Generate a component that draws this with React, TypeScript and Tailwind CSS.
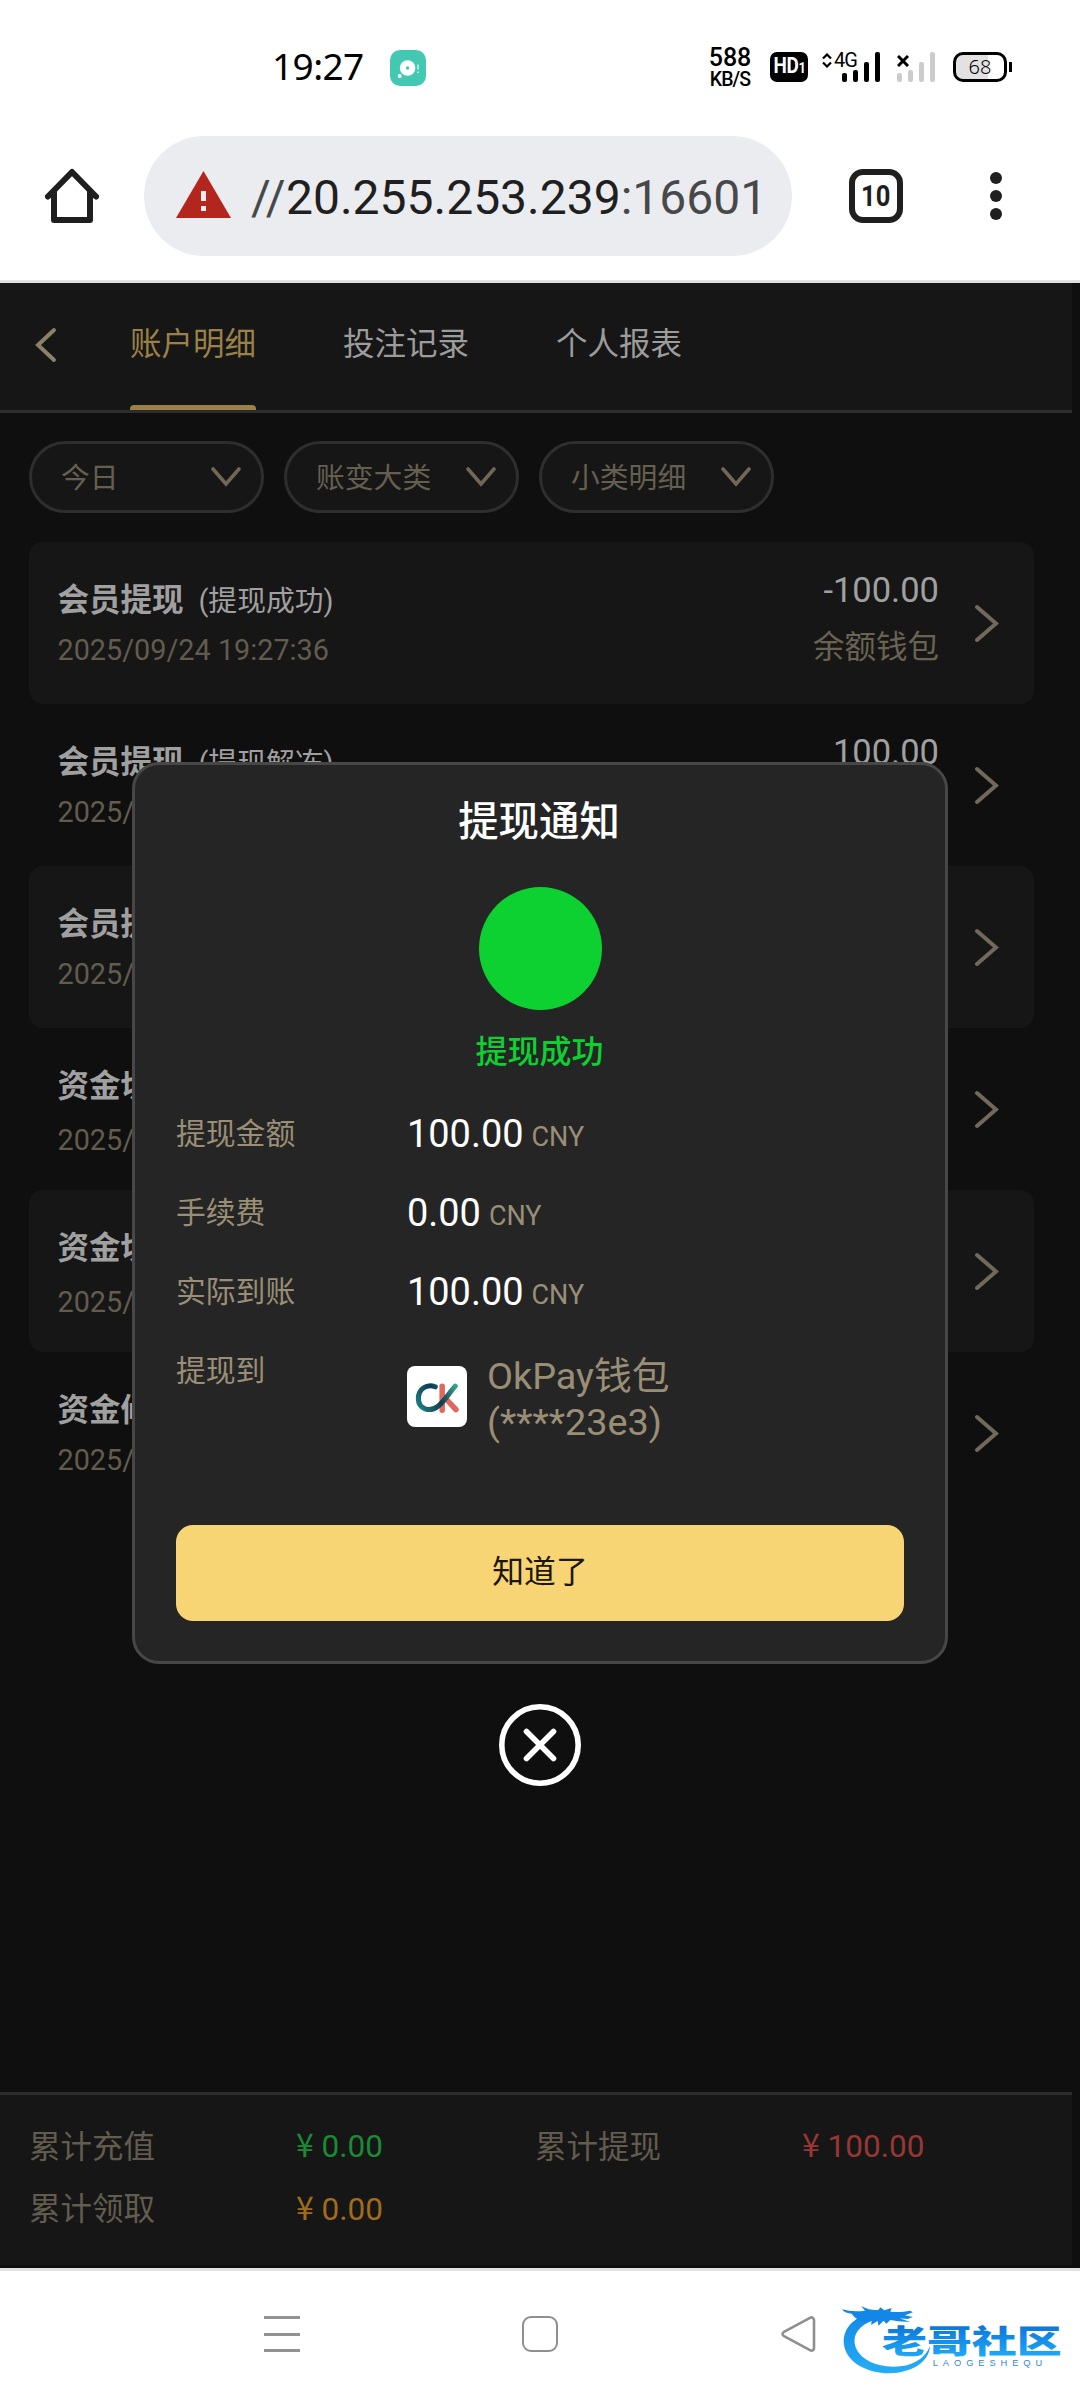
import { FC } from "react";
import { clsx } from "clsx";

interface RecordRow {
  title: string;
  status?: string;
  time: string;
  amount: string;
  wallet: string;
  loose?: boolean;
}

const tabs = ["账户明细", "投注记录", "个人报表"];
const filters = ["今日", "账变大类", "小类明细"];

const records: RecordRow[] = [
  { title: "会员提现", status: "(提现成功)", time: "2025/09/24 19:27:36", amount: "-100.00", wallet: "余额钱包" },
  { title: "会员提现", status: "(提现解冻)", time: "2025/09/24 19:27:36", amount: "100.00", wallet: "余额钱包" },
  { title: "会员提现", status: "(提现冻结)", time: "2025/09/24 19:26:12", amount: "-100.00", wallet: "余额钱包" },
  { title: "资金切换", time: "2025/09/24 19:25:48", amount: "100.00", wallet: "余额钱包", loose: true },
  { title: "资金切换", time: "2025/09/24 19:25:48", amount: "-100.00", wallet: "余额钱包", loose: true },
  { title: "资金修正", time: "2025/09/24 19:20:05", amount: "100.00", wallet: "余额钱包" },
];

const totals = [
  { label: "累计充值", value: "0.00", color: "text-[#1a8a35]" },
  { label: "累计提现", value: "100.00", color: "text-[#983735]" },
  { label: "累计领取", value: "0.00", color: "text-[#a16c1b]" },
];

const details = [
  { label: "提现金额", value: "100.00" },
  { label: "手续费", value: "0.00" },
  { label: "实际到账", value: "100.00" },
];

const SignalBars: FC<{ className: string }> = ({ className }) => (
  <div className={clsx("flex items-end gap-[6px]", className)}>
    <div className="h-[9px] w-[5px] rounded-[2px] bg-current" />
    <div className="h-3 w-[5px] rounded-[2px] bg-current" />
    <div className="h-5 w-[5px] rounded-[2px] bg-current" />
    <div className="h-[30px] w-[5px] rounded-[2px] bg-current" />
  </div>
);

const StatusBar = () => (
  <div className="flex h-[136px] items-start pl-[272px] text-black">
    <span className="mt-[41px] w-[118px] font-['Noto_Sans',sans-serif] text-[37px] leading-[50px] tracking-[-0.6px]">
      19:27
    </span>
    <svg className="mt-[50px] h-9 w-9" viewBox="0 0 36 36">
      <rect width="36" height="36" rx="10" fill="#43c8b4" />
      <circle cx="17.6" cy="18" r="7.8" fill="#fff" />
      <circle cx="17.6" cy="18" r="1.7" fill="#43c8b4" />
      <circle cx="9.7" cy="26" r="2" fill="#fff" />
      <path d="M28 14.500v5M28 21.500v1.500" stroke="#c5f0e8" strokeWidth="1.600" />
    </svg>
    <div className="mt-[46px] ml-[280px] flex w-12 flex-col items-center font-medium">
      <span className="text-[25px] leading-[24px]">588</span>
      <span className="text-[19.5px] leading-[20px] tracking-[-0.9px]">KB/S</span>
    </div>
    <div className="mt-[52px] ml-4 flex h-[30px] w-[38px] items-center justify-center rounded-[7px] bg-black">
      <span className="scale-x-[0.86] text-[22px] leading-[30px] font-bold tracking-[-0.5px] text-white">
        HD<span className="text-[15px]">1</span>
      </span>
    </div>
    <div className="relative mt-[52px] ml-[14px] h-[30px] w-[58px]">
      <svg className="absolute top-[1px] left-0 h-[15px] w-[10px]" viewBox="0 0 10 15" fill="none" stroke="#000" strokeWidth="2.200">
        <path d="M1 5.500 5 1.500l4 4M1 9.500l4 4 4-4" />
      </svg>
      <span className="absolute top-[-2px] left-3 text-[20px] leading-[20px] tracking-[-1px]">4G</span>
      <SignalBars className="absolute right-0 bottom-0" />
    </div>
    <div className="relative mt-[52px] ml-[17px] h-[30px] w-[38px]">
      <svg className="absolute top-[3px] left-0 h-3 w-3" viewBox="0 0 12 12" stroke="#000" strokeWidth="3">
        <path d="M1 1l10 10M11 1 1 11" />
      </svg>
      <SignalBars className="absolute bottom-0 left-0 text-[#cccccc]" />
    </div>
    <div className="mt-[52px] ml-[18px] flex items-center gap-[2px]">
      <div className="flex h-[30px] w-[54px] items-center justify-center rounded-[10px] border-[3px] border-black bg-linear-to-r from-[#e2e2e2] from-66% to-white to-66%">
        <span className="font-['Noto_Sans',sans-serif] text-[20px] leading-[24px] font-light">68</span>
      </div>
      <div className="h-[10px] w-[3px] bg-black" />
    </div>
  </div>
);

const AddressBar = () => (
  <div className="flex h-[147px] items-start border-b-[3px] border-[#e0e0e0] pl-[45px]">
    <svg className="mt-8 h-[56px] w-[54px]" viewBox="0 0 54 56" fill="none" stroke="#1f1f1f" strokeWidth="6" strokeLinecap="round" strokeLinejoin="round">
      <path d="M3 28.500 27 4l24 24.500" />
      <path d="M9 24v28h36V24" />
    </svg>
    <div className="ml-[45px] flex h-[120px] w-[648px] items-center rounded-full bg-[#ebecf0] pl-8">
      <svg className="-mt-1 h-[47px] w-[55px]" viewBox="0 0 55 47">
        <path d="M27.500 0 55 47H0z" fill="#b3261e" />
        <path d="M27.500 20v10M27.500 35v5" stroke="#ebecf0" strokeWidth="5" />
      </svg>
      <span className="mt-[3px] ml-[20px] text-[48px] leading-[60px] text-[#1f1f1f]">
        <span className="tracking-[0.3px] text-[#47484a]">//</span>
        20.255.253.239<span className="text-[#47484a]">:16601</span>
      </span>
    </div>
    <div className="mt-[33px] ml-[57px] flex h-[54px] w-[54px] items-center justify-center rounded-[14px] border-[6px] border-[#1f1f1f]">
      <span className="scale-x-[0.88] text-[29px] leading-[40px] font-bold text-[#1f1f1f]">10</span>
    </div>
    <div className="mt-9 ml-[87px] flex flex-col gap-[6px]">
      <div className="h-3 w-3 rounded-full bg-[#1f1f1f]" />
      <div className="h-3 w-3 rounded-full bg-[#1f1f1f]" />
      <div className="h-3 w-3 rounded-full bg-[#1f1f1f]" />
    </div>
  </div>
);

const PageHeader = () => (
  <div className="flex h-[130px] w-[1072px] border-b-[3px] border-[#2d2d2d] bg-[#161616] pl-[35px]">
    <svg className="mt-[44px] h-[36px] w-[22px]" viewBox="0 0 22 36" fill="none" stroke="#8b8168" strokeWidth="4" strokeLinecap="round">
      <path d="M19 3 3 18l16 15" />
    </svg>
    <div className="ml-[73px] flex gap-[87px]">
      {tabs.map((tab, idx) => (
        <div key={tab} className="flex w-[126px] flex-col justify-between">
          <span
            className={clsx(
              "mt-[39px] text-[31.5px] leading-[46px] whitespace-nowrap",
              idx === 0 ? "text-[#9a8148]" : "text-[#9c9c9c]",
            )}
          >
            {tab}
          </span>
          {idx === 0 && <div className="h-[5px] rounded-t-[4px] bg-[#9a8148]" />}
        </div>
      ))}
    </div>
  </div>
);

const FilterBar = () => (
  <div className="flex gap-5 pt-7 pl-[29px]">
    {filters.map((filter) => (
      <div
        key={filter}
        className="flex h-[72px] w-[235px] items-center justify-between rounded-full border-[3px] border-[#2e2e2e] bg-[#161616] pr-5 pl-[29px]"
      >
        <span className="mt-[2px] text-[28.8px] leading-[40px] text-[#655f50]">{filter}</span>
        <svg className="h-[20px] w-[30px]" viewBox="0 0 30 20" fill="none" stroke="#6f6854" strokeWidth="3.600" strokeLinecap="round">
          <path d="M2 2l13 15L28 2" />
        </svg>
      </div>
    ))}
  </div>
);

const RecordItem: FC<{ record: RecordRow; filled: boolean }> = ({ record, filled }) => (
  <div className={clsx("flex h-[162px] w-[1005px] rounded-[14px] pr-[27px] pl-[28.5px]", filled && "bg-[#161616]")}>
    <div className="flex-1 pt-[37px]">
      <div className="flex items-center gap-[15px] leading-[44px] text-[#a0a0a0]">
        <span className="text-[31.5px] font-bold">{record.title}</span>
        {record.status && <span className="text-[28.8px]">{record.status}</span>}
      </div>
      <p className={clsx("text-[28.8px] leading-9 text-[#625c4e]", record.loose ? "mt-[13px]" : "mt-[9px]")}>
        {record.time}
      </p>
    </div>
    <div className="flex flex-col items-end pt-[26px]">
      <span className="text-[34.5px] leading-[44px] text-[#a0a0a0]">{record.amount}</span>
      <span className="mt-[14px] text-[31.5px] leading-[44px] text-[#6a6352]">{record.wallet}</span>
    </div>
    <svg className="mt-[61px] mr-2 ml-[34px] h-[40px] w-[26px]" viewBox="0 0 26 40" fill="none" stroke="#716a5b" strokeWidth="4" strokeLinecap="round">
      <path d="M4 4l19 16.500L4 37" />
    </svg>
  </div>
);

const OkPayLogo = () => (
  <svg className="mb-[5px] h-[61px] w-[60px] shrink-0 rounded-[8px] bg-white" viewBox="0 0 174 182" preserveAspectRatio="none" fill="none" strokeLinecap="round">
    <defs>
      <linearGradient id="ok-loop" x1="30" y1="130" x2="148" y2="55" gradientUnits="userSpaceOnUse">
        <stop offset="0" stopColor="#1e8585" />
        <stop offset="0.5" stopColor="#0f3a50" />
        <stop offset="1" stopColor="#3cb496" />
      </linearGradient>
    </defs>
    <path d="M102 60v72M112 97l30 33" stroke="#e0665e" strokeWidth="16" />
    <path d="M82 62C58 52 33 68 33 97c0 32 33 42 57 23 18-15 34-42 50-60" stroke="url(#ok-loop)" strokeWidth="15" />
  </svg>
);

const WithdrawModal = () => (
  <div className="absolute inset-0 flex flex-col items-center pt-[762px]">
    <div className="flex h-[902px] w-[816px] flex-col items-center rounded-[27px] border-[3px] border-[#474747] bg-[#252525] px-[41px] pt-[28px]">
      <h2 className="-ml-[2px] text-[40.4px] leading-[60px] font-medium text-white">提现通知</h2>
      <div className="mt-[34px] h-[123px] w-[123px] rounded-full bg-[#0cd131]" />
      <p className="mt-5 -ml-px text-[32px] leading-[44px] font-medium text-[#0cd131]">提现成功</p>
      <div className="mt-[20px] flex w-full flex-col">
        {details.map((item) => (
          <div key={item.label} className="flex h-[79px] items-center">
            <span className="mt-[2px] w-[231px] text-[29.8px] text-[#9a8f76]">{item.label}</span>
            <span className="mt-[2px] text-[37.9px] text-white">{item.value}</span>
            <span className="mt-[8px] ml-2 text-[27px] text-[#9a8f76]">CNY</span>
          </div>
        ))}
        <div className="flex h-[194px] items-start">
          <span className="w-[231px] text-[29.8px] leading-[79px] text-[#9a8f76]">提现到</span>
          <div className="mt-[22px] flex items-center gap-5">
            <OkPayLogo />
            <p className="text-[37.8px] leading-[46px] text-[#9a8f76]">
              OkPay钱包
              <br />
              (****23e3)
            </p>
          </div>
        </div>
      </div>
      <button className="h-[96px] w-full shrink-0 rounded-[17px] bg-[#f7d474] pb-[2px] text-[31.8px] leading-[44px] text-[#1c1606]">
        知道了
      </button>
    </div>
    <svg className="mt-10 h-[82px] w-[82px]" viewBox="0 0 82 82" fill="none" stroke="#fff" strokeLinecap="round">
      <circle cx="41" cy="41" r="38.200" strokeWidth="5.600" />
      <path d="M27.500 27.500l27 27M54.500 27.500l-27 27" strokeWidth="5.600" />
    </svg>
  </div>
);

const Totals = () => (
  <div className="grid h-[173px] w-[1072px] grid-cols-[506px_1fr] content-start border-t-[3px] border-[#2d2d2d] bg-[#161616] pt-[21px] pl-[29px]">
    {totals.map((item) => (
      <div key={item.label} className="flex h-[62.500px] items-center text-[31.5px]">
        <span className="w-[267px] text-[#625c4e]">{item.label}</span>
        <span className={clsx("-mt-px", item.color)}>
          <span className="font-['Noto_Sans_CJK_SC',sans-serif] text-[32px] leading-[30px]">¥</span> {item.value}
        </span>
      </div>
    ))}
  </div>
);

const Watermark = () => (
  <svg className="absolute right-0 bottom-0 h-[110px] w-[260px]" viewBox="0 0 784 330" preserveAspectRatio="none">
    <defs>
      <linearGradient id="wm-ring" x1="0" y1="50" x2="0" y2="250" gradientUnits="userSpaceOnUse">
        <stop offset="0" stopColor="#1184e6" />
        <stop offset="1" stopColor="#25adf6" />
      </linearGradient>
      <linearGradient id="wm-text" x1="0" y1="0" x2="0" y2="1">
        <stop offset="0.2" stopColor="#0b76da" />
        <stop offset="0.9" stopColor="#20aaf8" />
      </linearGradient>
    </defs>
    {/* dragon body */}
    <path
      d="M142 72C94 88 68 122 72 162c6 52 66 88 138 88 66-2 118-32 122-82-18 42-58 62-108 62-68 0-120-34-120-78 0-30 26-54 72-66z"
      fill="url(#wm-ring)"
    />
    {/* head, horns and whiskers */}
    <path
      d="M66 58c22 6 44 7 70 4l-12-14c18 10 34 13 52 12l6-8 12 9 22-7-4 11c24 2 42 0 60-3l8 5-24 9 24 5-16 6-24-2 32 11-36-2-24-4-12 11-8-9-16 15-2-14-20 12 2-14-24 4c-20-6-32-16-36-24-12 0-24-4-30-13z"
      fill="#1387e8"
    />
    <text
      x="187"
      y="189"
      fontSize="96"
      fontWeight="900"
      textLength="542"
      lengthAdjust="spacingAndGlyphs"
      className="font-['Noto_Sans_CJK_SC',sans-serif]"
      fill="url(#wm-text)"
    >
      老哥社区
    </text>
    <text x="340" y="229" fontSize="28" textLength="330" className="font-['Liberation_Sans',sans-serif]" fill="#2f88dc">
      LAOGESHEQU
    </text>
  </svg>
);

const NavBar = () => (
  <div className="relative flex h-[132px] items-start border-t-[3px] border-[#e2e2e2] bg-white pt-[45px] pl-[264px]">
    <div className="flex h-9 w-9 flex-col justify-between">
      <div className="h-[3px] bg-[#929292]" />
      <div className="h-[3px] bg-[#929292]" />
      <div className="h-[3px] bg-[#929292]" />
    </div>
    <div className="ml-[222px] h-9 w-9 rounded-[9px] border-[2.500px] border-[#8f8f8f]" />
    <svg className="ml-[222px] h-9 w-[36px]" viewBox="0 0 36 36" fill="none" stroke="#8f8f8f" strokeWidth="2.600">
      <path d="M30 1.800 4 15.800c-2 1.200-2 3.200 0 4.400L30 34.200c2 1 4 0 4-2V4c0-2-2-3.200-4-2.200z" />
    </svg>
    <Watermark />
  </div>
);

const App = () => {
  return (
    <div className="relative flex h-[2400px] w-[1080px] flex-col overflow-hidden bg-white font-['Roboto','Noto_Sans_CJK_SC',sans-serif]">
      <StatusBar />
      <AddressBar />
      <div className="flex h-[1985px] flex-col bg-[#0f0f0f]">
        <PageHeader />
        <FilterBar />
        <div className="mt-[29px] flex flex-1 flex-col pl-[29px]">
          {records.map((record, idx) => (
            <RecordItem key={idx} record={record} filled={idx % 2 === 0} />
          ))}
        </div>
        <Totals />
        <div className="h-[3px]" />
      </div>
      <NavBar />
      <WithdrawModal />
    </div>
  );
};

export default App;
